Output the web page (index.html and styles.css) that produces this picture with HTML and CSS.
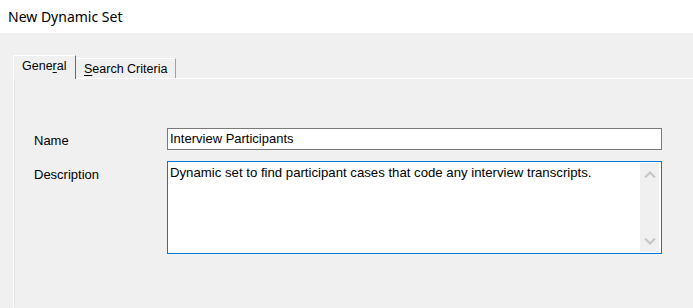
FILE: index.html
```html
<!DOCTYPE html>
<html lang="en">
<head>
<meta charset="UTF-8">
<title>New Dynamic Set</title>
<link rel="stylesheet" href="styles.css">
</head>
<body>

<div class="titlebar">New Dynamic Set</div>

<div class="dialog">
    <div class="tabs">
        <div class="tab active">Gene<u>r</u>al</div>
        <div class="tab"><u>S</u>earch Criteria</div>
    </div>

    <div class="panel">
        <div class="form">
            <label class="form-label">Name</label>
            <div class="textbox">Interview Participants</div>

            <label class="form-label desc">Description</label>
            <div class="memo">
                <div class="memo-text">Dynamic set to find participant cases that code any interview transcripts.</div>
                <div class="scrollbar">
                    <svg width="12" height="8" viewBox="0 0 12 8"><path d="M1 6.5 L6 1.5 L11 6.5" fill="none" stroke="#c4c4c4" stroke-width="2"/></svg>
                    <svg width="12" height="8" viewBox="0 0 12 8"><path d="M1 1.5 L6 6.5 L11 1.5" fill="none" stroke="#c4c4c4" stroke-width="2"/></svg>
                </div>
            </div>
        </div>
    </div>
</div>

</body>
</html>
```

FILE: styles.css
```css
body {
    margin: 0;
    background-color: #f0f0f0;
    font-family: "Liberation Sans", Arial, sans-serif;
    font-size: 13px;
    color: #000;
    overflow: hidden;
    height: 308px;
}

.titlebar {
    background-color: #fff;
    height: 33px;
    line-height: 33px;
    padding-left: 8px;
    font-family: "Noto Sans", "Open Sans", sans-serif;
    font-size: 14px;
    color: #000;
}

.dialog {
    padding: 22px 0 0 13px;
}

/* Tab strip */
.tabs {
    display: flex;
    align-items: flex-end;
    height: 23px;
}

.tab {
    height: 19px;
    line-height: 20px;
    padding: 0 7px 0 8px;
    border-top: 1px solid #fff;
    border-left: 1px solid #fff;
    border-right: 1px solid #a0a0a0;
    font-size: 12.5px;
    white-space: nowrap;
}

.tab.active {
    height: 23px;
    line-height: 21px;
    width: 46px;
    position: relative;
    z-index: 1;
    margin-bottom: -1px;
    background-color: #f0f0f0;
    border-right-color: #696969;
}

.tab + .tab {
    border-left: none;
    width: 84px;
}

.tab u {
    text-decoration-thickness: 1px;
    text-underline-offset: 2px;
}

/* Panel */
.panel {
    border-top: 1px solid #fff;
    border-left: 1px solid #fff;
    box-shadow: inset 1px 0 0 #e3e3e3;
    height: 228px;
}

.form {
    display: grid;
    grid-template-columns: 133px 495px;
    row-gap: 11px;
    padding: 49px 0 0 20px;
}

.form-label {
    padding-top: 5px;
}

.form-label.desc {
    padding-top: 6px;
}

.textbox {
    height: 20px;
    line-height: 20px;
    border: 1px solid #7a7a7a;
    background-color: #fff;
    padding: 0 2px;
}

.memo {
    height: 91px;
    border: 1px solid #0078d7;
    background-color: #fff;
    display: flex;
}

.memo-text {
    flex: 1;
    padding: 3px 2px;
    line-height: 15px;
    font-size: 13.2px;
}

.scrollbar {
    width: 19px;
    margin: 1px 2px 1px 0;
    background-color: #f0f0f0;
    display: flex;
    flex-direction: column;
    justify-content: space-between;
    align-items: center;
    padding: 8px 0 7px;
    box-sizing: border-box;
}

.scrollbar svg {
    display: block;
}
```
